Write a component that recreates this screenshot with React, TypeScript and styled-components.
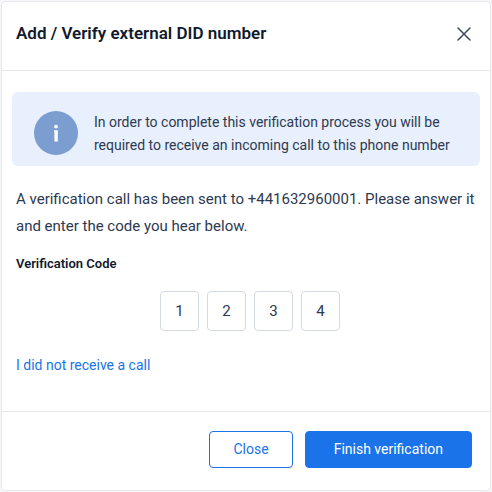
import React from "react";
import styled, { createGlobalStyle } from "styled-components";

const GlobalStyle = createGlobalStyle`
  *, *::before, *::after { box-sizing: border-box; }
  body {
    margin: 0;
    background: #f6f6f8;
    color: #2d3950;
    font: 400 15px/27px Roboto, sans-serif;
  }
  button, input { font: inherit; }
`;

const Dialog = styled.section`
  margin: 1px;
  background: #ffffff;
  border: 1px solid #e6e8ec;
  border-radius: 4px;
`;

const Header = styled.header`
  display: flex;
  align-items: center;
  justify-content: space-between;
  padding: 19px 14px 24px;
  border-bottom: 1px solid #e6e8ee;
`;

const Title = styled.h1`
  margin: 0;
  color: #111a2c;
  font-size: 17px;
  line-height: 25px;
  font-weight: 600;
`;

const DismissButton = styled.button`
  display: flex;
  padding: 5px;
  border: 0;
  background: transparent;
  color: #3c495e;
  cursor: pointer;
`;

const Body = styled.div`
  padding: 21px 10px 32px;
  border-bottom: 1px solid #e6e8ec;
`;

const Notice = styled.div`
  display: flex;
  align-items: flex-start;
  gap: 16px;
  padding: 19px 22px 9px;
  border-radius: 6px;
  background: #e8f0fe;
`;

const NoticeIcon = styled.svg`
  flex: none;
`;

const NoticeText = styled.p`
  margin: 0;
  font-size: 14px;
  line-height: 23px;
`;

const Form = styled.form`
  padding: 20px 4px 0;
`;

const Message = styled.p`
  margin: 0;
`;

const Fieldset = styled.fieldset`
  min-width: 0;
  margin: 12px 0 21px;
  padding: 0;
  border: 0;
`;

const Legend = styled.legend`
  padding: 0;
  color: #111a2c;
  font-size: 13px;
  line-height: 24px;
  font-weight: 600;
`;

const CodeRow = styled.div`
  display: flex;
  justify-content: center;
  gap: 8px;
  padding: 15px 0 0 8px;
`;

const DigitInput = styled.input`
  width: 39px;
  height: 40px;
  padding: 0;
  border: 1px solid #d5dae2;
  border-radius: 4px;
  background: #ffffff;
  color: #2d3950;
  text-align: center;
`;

const RetryLink = styled.a`
  display: inline-block;
  color: #1a73e8;
  font-size: 14px;
  text-decoration: none;
`;

const Footer = styled.footer`
  display: flex;
  justify-content: flex-end;
  gap: 12px;
  padding: 19px 18px 22px;
`;

const ActionButton = styled.button<{ $primary?: boolean }>`
  height: 37px;
  padding: 0 ${(p) => (p.$primary ? 28 : 23)}px;
  border: 1px solid #1a73e8;
  border-radius: 4px;
  background: ${(p) => (p.$primary ? "#1a73e8" : "#ffffff")};
  color: ${(p) => (p.$primary ? "#ffffff" : "#1a73e8")};
  font-size: 14px;
  cursor: pointer;
`;

const digits = ["1", "2", "3", "4"];

export default function App() {
  return (
    <>
      <GlobalStyle />
      <Dialog role="dialog" aria-labelledby="dialog-title">
        <Header>
          <Title id="dialog-title">Add / Verify external DID number</Title>
          <DismissButton type="button" aria-label="Dismiss">
            <svg width="14" height="14" viewBox="0 0 14 14" aria-hidden="true">
              <path d="M1 1L13 13M13 1L1 13" fill="none" stroke="currentColor" strokeWidth="1.5" strokeLinecap="round" />
            </svg>
          </DismissButton>
        </Header>
        <Body>
          <Notice>
            <NoticeIcon width="44" height="44" viewBox="0 0 44 44" aria-hidden="true">
              <circle cx="22" cy="22" r="22" fill="#7b9dd0" />
              <circle cx="22" cy="15.6" r="1.9" fill="#fff" />
              <path d="M20 19.2h3.8v11.2h-3.4v-9.8h-.4z" fill="#fff" />
            </NoticeIcon>
            <NoticeText>
              In order to complete this verification process you will be required to receive an incoming call to this phone number
            </NoticeText>
          </Notice>
          <Form id="verify-form" onSubmit={(e: React.FormEvent) => e.preventDefault()}>
            <Message>
              A verification call has been sent to +441632960001. Please answer it and enter the code you hear below.
            </Message>
            <Fieldset>
              <Legend>Verification Code</Legend>
              <CodeRow>
                {digits.map((digit, i) => (
                  <DigitInput key={digit} aria-label={`Digit ${i + 1}`} inputMode="numeric" maxLength={1} defaultValue={digit} />
                ))}
              </CodeRow>
            </Fieldset>
            <RetryLink href="#retry">I did not receive a call</RetryLink>
          </Form>
        </Body>
        <Footer>
          <ActionButton type="button">Close</ActionButton>
          <ActionButton type="submit" form="verify-form" $primary>
            Finish verification
          </ActionButton>
        </Footer>
      </Dialog>
    </>
  );
}
